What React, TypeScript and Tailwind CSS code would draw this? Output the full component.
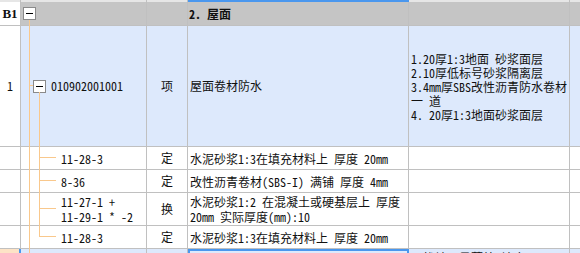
import React from "react";

const FONT = { fontFamily: '"Noto Sans Mono CJK SC", "Noto Sans CJK SC", "Liberation Mono", monospace' };

const B = "border-r border-[#c0c0c0]";
const OR = "bg-[#f9c88c]";

function MinusBox() {
  return (
    <div className="w-[13px] h-[13px] border border-[#8a8a8a] bg-white flex items-center justify-center shrink-0">
      <div className="w-[7px] h-[1px] bg-black" />
    </div>
  );
}

function ChildRow({ h, code, type, desc, last, tall }: { h: string; code: React.ReactNode; type: string; desc: React.ReactNode; last?: boolean; tall?: boolean }) {
  return (
    <div className={`flex ${h} border-b border-[#c0c0c0] bg-white`}>
      <div className={`w-[21px] shrink-0 ${B}`} />
      <div className={`w-[126px] shrink-0 ${B} relative flex items-center pl-[40px]`}>
        <div className={`absolute left-[8px] top-0 bottom-[-1px] w-[1px] ${OR}`} />
        {last ? (
          <div className={`absolute left-[18px] top-0 h-[11px] w-[1px] ${OR}`} />
        ) : (
          <div className={`absolute left-[18px] top-0 bottom-[-1px] w-[1px] ${OR}`} />
        )}
        <div className={`absolute left-[18px] ${tall ? "top-[15px]" : "top-[10px]"} w-[17px] h-[1px] ${OR}`} />
        <div className="text-[12px] leading-[15px] text-[#111] whitespace-nowrap">{code}</div>
      </div>
      <div className={`w-[41px] shrink-0 ${B} flex items-center justify-center text-[12px] text-[#111]`}>{type}</div>
      <div className={`w-[221px] shrink-0 ${B} flex items-center pl-[2px] text-[12px] leading-[15px] text-[#111] whitespace-nowrap`}>{desc}</div>
      <div className={`w-[161px] shrink-0 ${B}`} />
      <div className="flex-1" />
    </div>
  );
}

const descLines = [
  "1.20厚1:3地面 砂浆面层",
  "2.10厚低标号砂浆隔离层",
  "3.4mm厚SBS改性沥青防水卷材",
  "一 道",
  "4. 20厚1:3地面砂浆面层",
];

export default function App() {
  return (
    <div className="w-[580px] h-[253px] overflow-hidden bg-white select-none" style={FONT}>
      {/* top strip */}
      <div className="flex h-[2px] bg-[#e6e6e6]">
        <div className={`w-[21px] shrink-0 ${B}`} />
        <div className={`w-[126px] shrink-0 ${B}`} />
        <div className={`w-[41px] shrink-0 ${B}`} />
        <div className="w-[221px] shrink-0 bg-[#4a97ee]" />
        <div className={`w-[161px] shrink-0 ${B}`} />
        <div className="flex-1" />
      </div>
      {/* header row */}
      <div className="flex h-[24px] border-b border-[#c0c0c0] bg-[#c5c5c5]">
        <div className={`w-[21px] shrink-0 ${B} bg-white flex items-center justify-center text-[13px] font-bold text-[#111]`} style={{ fontFamily: '"Liberation Serif", serif' }}>
          B1
        </div>
        <div className={`w-[126px] shrink-0 ${B} relative`}>
          <div className="absolute left-[2px] top-[5px]">
            <MinusBox />
          </div>
          <div className={`absolute left-[8px] top-[18px] bottom-[-1px] w-[1px] ${OR}`} />
        </div>
        <div className={`w-[41px] shrink-0 ${B}`} />
        <div className={`w-[221px] shrink-0 ${B} flex items-center pl-[1px] text-[12px] font-bold text-[#111]`}>2. 屋面</div>
        <div className={`w-[161px] shrink-0 ${B}`} />
        <div className="flex-1" />
      </div>
      {/* row 1 */}
      <div className="flex h-[121px] border-b border-[#c0c0c0] bg-[#dde9fc]">
        <div className={`w-[21px] shrink-0 ${B} bg-white flex items-center justify-center text-[12px] text-[#111]`}>1</div>
        <div className={`w-[126px] shrink-0 ${B} relative flex items-center pl-[12px]`}>
          <div className={`absolute left-[8px] top-0 bottom-[-1px] w-[1px] ${OR}`} />
          <div className={`absolute left-[8px] top-[59px] w-[4px] h-[1px] ${OR}`} />
          <div className={`absolute left-[18px] top-[66px] bottom-[-1px] w-[1px] ${OR}`} />
          <MinusBox />
          <span className="ml-[5px] text-[12px] text-[#111]">010902001001</span>
        </div>
        <div className={`w-[41px] shrink-0 ${B} flex items-center justify-center text-[12px] text-[#111]`}>项</div>
        <div className={`w-[221px] shrink-0 ${B} flex items-center pl-[2px] text-[12px] text-[#111]`}>屋面卷材防水</div>
        <div className={`w-[161px] shrink-0 ${B} flex flex-col justify-center pl-[2px] pt-[2px] text-[12px] text-[#111]`}>
          {descLines.map((l) => (
            <div key={l} className="h-[14px] leading-[14px] whitespace-nowrap">
              {l}
            </div>
          ))}
        </div>
        <div className="flex-1" />
      </div>
      <ChildRow h="h-[23px]" code="11-28-3" type="定" desc="水泥砂浆1:3在填充材料上 厚度 20mm" />
      <ChildRow h="h-[23px]" code="8-36" type="定" desc="改性沥青卷材(SBS-I) 满铺 厚度 4mm" />
      <ChildRow
        h="h-[33px]"
        tall
        code={
          <>
            <div>11-27-1 +</div>
            <div>11-29-1 * -2</div>
          </>
        }
        type="换"
        desc={
          <div>
            <div>水泥砂浆1:2 在混凝土或硬基层上 厚度</div>
            <div>20mm  实际厚度(mm):10</div>
          </div>
        }
      />
      <ChildRow h="h-[23px]" code="11-28-3" type="定" desc="水泥砂浆1:3在填充材料上 厚度 20mm" last />
      {/* partial last row */}
      <div className="flex h-[30px] bg-[#dde9fc]">
        <div className="w-[19px] shrink-0 bg-[#fde3c6]" />
        <div className="w-[2px] shrink-0 bg-[#4a97ee]" />
        <div className={`w-[126px] shrink-0 ${B} relative`}>
          <div className={`absolute left-[8px] top-0 bottom-0 w-[1px] ${OR}`} />
        </div>
        <div className={`w-[41px] shrink-0 ${B}`} />
        <div className="w-[221px] shrink-0 border-2 border-[#4a97ee]" />
        <div className={`w-[161px] shrink-0 ${B} pl-[14px] pt-[2px] text-[12px] leading-[14px] text-[#111] whitespace-nowrap overflow-hidden`}>找坡层最薄处  坡度</div>
        <div className="flex-1" />
      </div>
    </div>
  );
}
